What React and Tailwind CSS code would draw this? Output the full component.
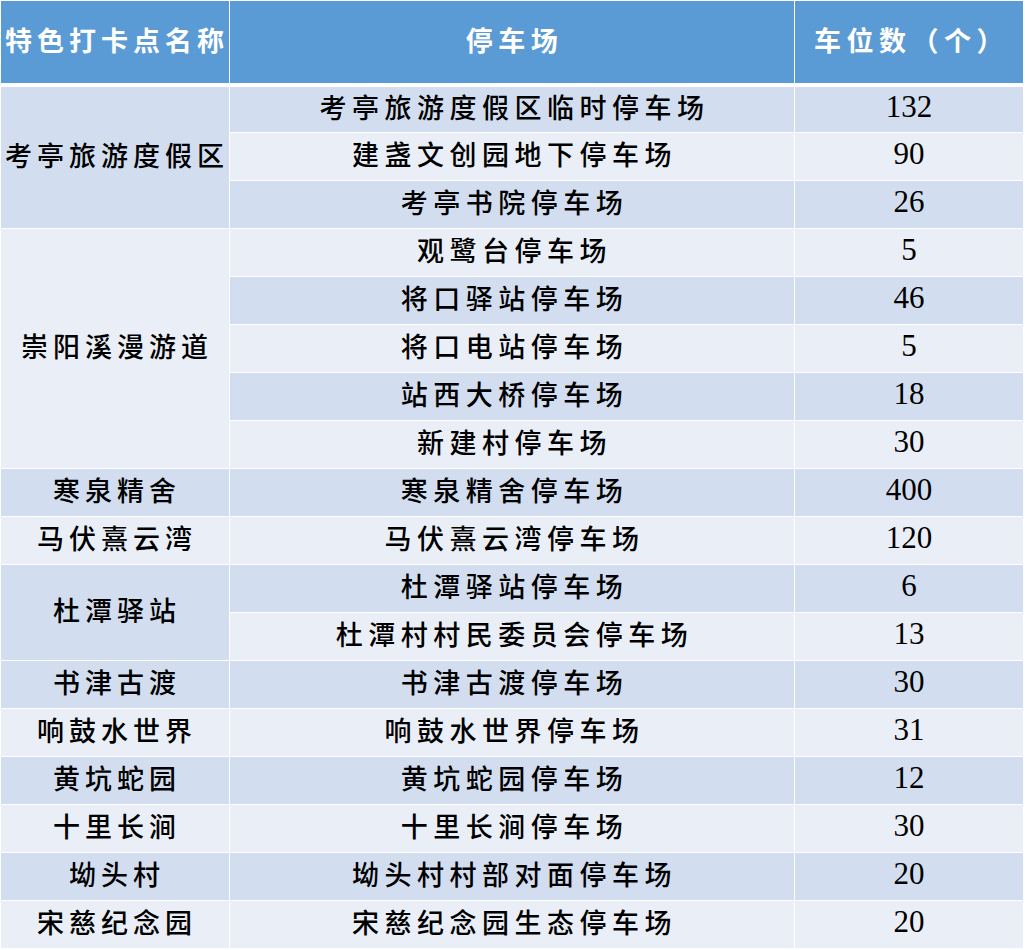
const groups = [
    { name: '考亭旅游度假区', lots: [['考亭旅游度假区临时停车场', 132], ['建盏文创园地下停车场', 90], ['考亭书院停车场', 26]] },
    { name: '崇阳溪漫游道', lots: [['观鹭台停车场', 5], ['将口驿站停车场', 46], ['将口电站停车场', 5], ['站西大桥停车场', 18], ['新建村停车场', 30]] },
    { name: '寒泉精舍', lots: [['寒泉精舍停车场', 400]] },
    { name: '马伏熹云湾', lots: [['马伏熹云湾停车场', 120]] },
    { name: '杜潭驿站', lots: [['杜潭驿站停车场', 6], ['杜潭村村民委员会停车场', 13]] },
    { name: '书津古渡', lots: [['书津古渡停车场', 30]] },
    { name: '响鼓水世界', lots: [['响鼓水世界停车场', 31]] },
    { name: '黄坑蛇园', lots: [['黄坑蛇园停车场', 12]] },
    { name: '十里长涧', lots: [['十里长涧停车场', 30]] },
    { name: '坳头村', lots: [['坳头村村部对面停车场', 20]] },
    { name: '宋慈纪念园', lots: [['宋慈纪念园生态停车场', 20]] },
];

const cjk = { fontFamily: '"Liberation Serif", "Noto Sans CJK SC", serif' };

function rowBg(i) {
    return i % 2 === 0 ? 'bg-[#d2deef]' : 'bg-[#eaeff7]';
}

export default function App() {
    const cells = [];
    let row = 0;
    groups.forEach((g) => {
        const start = row;
        cells.push(
            <div
                key={'g' + start}
                className={`${rowBg(start)} col-start-1 flex items-center justify-center whitespace-nowrap pl-[4px] pb-px text-[27px] font-medium tracking-[5px] text-black`}
                style={{ gridRow: `${start + 1} / span ${g.lots.length}` }}
            >
                {g.name}
            </div>
        );
        g.lots.forEach(([lot, n]) => {
            cells.push(
                <div
                    key={'l' + row}
                    className={`${rowBg(row)} col-start-2 flex items-center justify-center whitespace-nowrap pl-[5px] pb-px text-[27px] font-medium tracking-[5.5px] text-black`}
                    style={{ gridRow: row + 1 }}
                >
                    {lot}
                </div>
            );
            cells.push(
                <div
                    key={'n' + row}
                    className={`${rowBg(row)} col-start-3 flex items-center justify-center pb-[5px] text-[31px] text-black`}
                    style={{ gridRow: row + 1 }}
                >
                    {n}
                </div>
            );
            row++;
        });
    });

    return (
        <div className="w-[1025px] h-[950px] bg-white pt-px pl-px pr-[2px] overflow-hidden" style={cjk}>
            {/* Header */}
            <div className="grid grid-cols-[228px_564px_1fr] gap-x-px h-[82px]">
                <div className="bg-[#5b9bd5] flex items-center justify-center whitespace-nowrap pl-[4px] text-white font-bold text-[27px] tracking-[5px]">特色打卡点名称</div>
                <div className="bg-[#5b9bd5] flex items-center justify-center whitespace-nowrap pl-[5px] text-white font-bold text-[27px] tracking-[5.5px]">停车场</div>
                <div className="bg-[#5b9bd5] flex items-center justify-center whitespace-nowrap pl-[5px] text-white font-bold text-[27px] tracking-[5.5px]">车位数（个）</div>
            </div>

            {/* Body */}
            <div className="mt-[4px] grid grid-cols-[228px_564px_1fr] grid-rows-[45px_repeat(17,47px)] gap-px">
                {cells}
            </div>
        </div>
    );
}
